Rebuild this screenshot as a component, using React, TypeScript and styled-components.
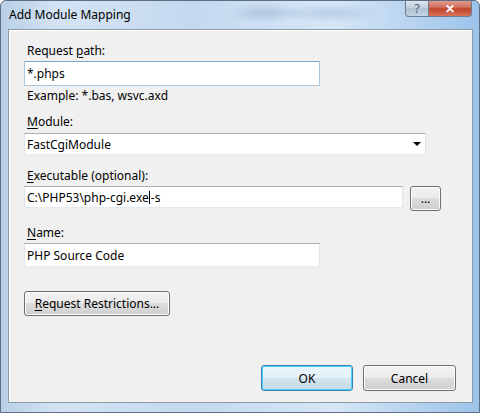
import React from "react";
import styled, { createGlobalStyle, css } from "styled-components";

const Global = createGlobalStyle`
  html, body { margin: 0; padding: 0; background: #fff; }
  body { width: 480px; height: 413px; overflow: hidden; font-family: "Noto Sans", "Open Sans", sans-serif; }
`;

const Window = styled.div`
  width: 480px;
  height: 413px;
  box-sizing: border-box;
  display: flex;
  flex-direction: column;
  border: 1px solid #5d6e82;
  border-radius: 6px 6px 0 0;
  background:
    radial-gradient(ellipse 40px 10px at 265px 12px, rgba(120,150,190,0.35), transparent),
    radial-gradient(ellipse 50px 10px at 330px 12px, rgba(120,150,190,0.3), transparent),
    linear-gradient(90deg, #b9cfe6 0%, #d3e3f3 12%, #c4d9ef 40%, #d6e6f6 70%, #9cc3ea 100%);
  overflow: hidden;
`;

const TitleBar = styled.div`
  height: 28px;
  display: flex;
  align-items: flex-start;
  justify-content: space-between;
  padding-left: 8px;
`;

const Title = styled.span`
  font-size: 12px;
  color: #000;
  line-height: 15px;
  margin-top: 6px;
`;

const Caption = styled.div`
  display: flex;
  margin-right: 7px;
  margin-top: -1px;
`;

const CapButton = styled.div<{ $close?: boolean }>`
  height: 17px;
  width: ${(p) => (p.$close ? 43 : 24)}px;
  display: flex;
  align-items: center;
  justify-content: center;
  box-sizing: border-box;
  border: 1px solid #6a7d93;
  border-top: none;
  color: #fff;
  font-weight: bold;
  font-size: 12px;
  ${(p) =>
    p.$close
      ? css`
          border-radius: 0 0 4px 0;
          border-left: none;
          background: linear-gradient(#e3a394 0%, #d1705d 45%, #c1442c 55%, #d8735a 100%);
        `
      : css`
          border-radius: 0 0 0 4px;
          background: linear-gradient(#dfe8f1 0%, #c5d3e1 45%, #aebfd1 55%, #c6d5e4 100%);
          color: #4a5a6c;
          font-weight: normal;
        `}
`;

const Client = styled.div`
  flex: 1;
  margin: 0 6px 9px 7px;
  background: #f0f0f0;
  border: 1px solid #8d9aa8;
  box-shadow: inset 1px 1px 0 #fff;
  display: flex;
  flex-direction: column;
  padding: 13px 16px 11px 15px;
  font-size: 12px;
  color: #000;
`;

const Label = styled.div<{ $gap?: number }>`
  line-height: 15px;
  padding-left: 3px;
  margin-top: ${(p) => p.$gap ?? 0}px;
`;

const Hint = styled(Label)``;

const U = styled.span`
  text-decoration: underline;
  text-underline-offset: 2px;
`;

const field = css`
  box-sizing: border-box;
  background: #fff;
  border: 1px solid #e2e3ea;
  border-top-color: #abadb3;
  border-bottom-color: #e3e9ef;
  padding: 0 2px;
  display: flex;
  align-items: center;
  font-size: 12px;
`;

const TextBox = styled.div<{ $w: number; $h: number; $mt: number; $focus?: boolean }>`
  ${field}
  width: ${(p) => p.$w}px;
  height: ${(p) => p.$h}px;
  margin-top: ${(p) => p.$mt}px;
  ${(p) =>
    p.$focus &&
    css`
      border-color: #a6c5df;
      border-top-color: #7fa7c9;
    `}
`;

const Row = styled.div<{ $mt: number }>`
  display: flex;
  align-items: flex-start;
  gap: 7px;
  margin-top: ${(p) => p.$mt}px;
`;

const Select = styled.div`
  ${field}
  width: 402px;
  height: 22px;
  margin-top: 4px;
  justify-content: space-between;
  padding-right: 4px;
`;

const Arrow = styled.span`
  width: 0;
  height: 0;
  border-left: 4px solid transparent;
  border-right: 4px solid transparent;
  border-top: 4px solid #000;
`;

const Caret = styled.span`
  display: inline-block;
  width: 1px;
  height: 13px;
  background: #000;
  margin: 0 0.5px;
  vertical-align: -2px;
`;

const Button = styled.button<{ $w: number; $h: number; $default?: boolean; $mt?: number }>`
  box-sizing: border-box;
  width: ${(p) => p.$w}px;
  height: ${(p) => p.$h}px;
  margin-top: ${(p) => p.$mt ?? 0}px;
  font-family: inherit;
  font-size: 12px;
  color: #000;
  padding: 0;
  border: 1px solid #707070;
  border-radius: 3px;
  background: linear-gradient(#f2f2f2 0%, #ebebeb 49%, #dddddd 50%, #cfcfcf 100%);
  box-shadow: inset 0 0 0 1px #fcfcfc;
  ${(p) =>
    p.$default &&
    css`
      border-color: #3c7fb1;
      box-shadow: inset 0 0 0 1px #48d1fe;
      background: linear-gradient(#eaf6fd 0%, #e4f1f9 49%, #d3e5ef 50%, #c5d9e6 100%);
    `}
`;

const Footer = styled.div`
  margin-top: auto;
  display: flex;
  justify-content: flex-end;
  gap: 10px;
`;

export default function App() {
  return (
    <>
      <Global />
      <Window>
        <TitleBar>
          <Title>Add Module Mapping</Title>
          <Caption>
            <CapButton>?</CapButton>
            <CapButton $close>✕</CapButton>
          </Caption>
        </TitleBar>
        <Client>
          <Label>
            Request <U>p</U>ath:
          </Label>
          <TextBox $w={296} $h={25} $mt={3} $focus>
            *.phps
          </TextBox>
          <Hint $gap={2}>Example: *.bas, wsvc.axd</Hint>
          <Label $gap={11}>
            <U>M</U>odule:
          </Label>
          <Select>
            FastCgiModule
            <Arrow />
          </Select>
          <Label $gap={13}>
            <U>E</U>xecutable (optional):
          </Label>
          <Row $mt={3}>
            <TextBox $w={379} $h={22} $mt={0}>
              C:\PHP53\php-cgi.exe<Caret />-s
            </TextBox>
            <Button $w={31} $h={25}>...</Button>
          </Row>
          <Label $gap={14}>
            <U>N</U>ame:
          </Label>
          <TextBox $w={296} $h={24} $mt={3}>
            PHP Source Code
          </TextBox>
          <Button $w={146} $h={25} $mt={24}>
            <U>R</U>equest Restrictions...
          </Button>
          <Footer>
            <Button $w={92} $h={26} $default>OK</Button>
            <Button $w={93} $h={26}>Cancel</Button>
          </Footer>
        </Client>
      </Window>
    </>
  );
}
